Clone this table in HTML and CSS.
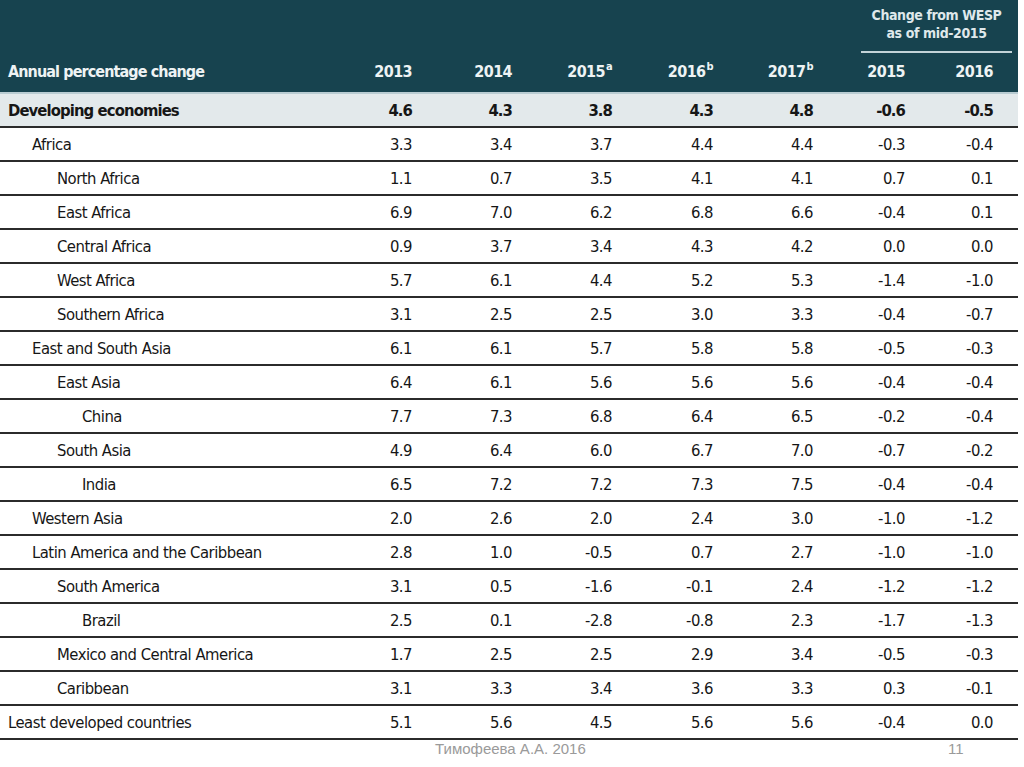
FILE: index.html
```html
<!DOCTYPE html>
<html lang="en">
<head>
<meta charset="utf-8">
<title>Annual percentage change</title>
<link rel="stylesheet" href="styles.css">
</head>
<body>
<div class="slide">
<table class="wesp">
  <colgroup>
    <col class="c-label"><col class="c-n"><col class="c-n"><col class="c-n"><col class="c-n4"><col class="c-n"><col class="c-n6"><col class="c-n7"><col class="c-pad">
  </colgroup>
  <thead>
    <tr class="h-top">
      <th></th><th></th><th></th><th></th><th></th><th></th>
      <th colspan="3" class="wesp-head"><div class="wesp-title">Change from WESP<br>as of mid-2015</div></th>
    </tr>
    <tr class="h-bot">
      <th class="lbl">Annual percentage change</th>
      <th>2013</th><th>2014</th><th>2015<sup>a</sup></th><th>2016<sup>b</sup></th><th>2017<sup>b</sup></th><th>2015</th><th>2016</th><th></th>
    </tr>
  </thead>
  <tbody>
    <tr class="total"><td class="lbl">Developing economies</td><td>4.6</td><td>4.3</td><td>3.8</td><td>4.3</td><td>4.8</td><td>-0.6</td><td>-0.5</td><td></td></tr>
    <tr><td class="lbl l1">Africa</td><td>3.3</td><td>3.4</td><td>3.7</td><td>4.4</td><td>4.4</td><td>-0.3</td><td>-0.4</td><td></td></tr>
    <tr><td class="lbl l2">North Africa</td><td>1.1</td><td>0.7</td><td>3.5</td><td>4.1</td><td>4.1</td><td>0.7</td><td>0.1</td><td></td></tr>
    <tr><td class="lbl l2">East Africa</td><td>6.9</td><td>7.0</td><td>6.2</td><td>6.8</td><td>6.6</td><td>-0.4</td><td>0.1</td><td></td></tr>
    <tr><td class="lbl l2">Central Africa</td><td>0.9</td><td>3.7</td><td>3.4</td><td>4.3</td><td>4.2</td><td>0.0</td><td>0.0</td><td></td></tr>
    <tr><td class="lbl l2">West Africa</td><td>5.7</td><td>6.1</td><td>4.4</td><td>5.2</td><td>5.3</td><td>-1.4</td><td>-1.0</td><td></td></tr>
    <tr><td class="lbl l2">Southern Africa</td><td>3.1</td><td>2.5</td><td>2.5</td><td>3.0</td><td>3.3</td><td>-0.4</td><td>-0.7</td><td></td></tr>
    <tr><td class="lbl l1">East and South Asia</td><td>6.1</td><td>6.1</td><td>5.7</td><td>5.8</td><td>5.8</td><td>-0.5</td><td>-0.3</td><td></td></tr>
    <tr><td class="lbl l2">East Asia</td><td>6.4</td><td>6.1</td><td>5.6</td><td>5.6</td><td>5.6</td><td>-0.4</td><td>-0.4</td><td></td></tr>
    <tr><td class="lbl l3">China</td><td>7.7</td><td>7.3</td><td>6.8</td><td>6.4</td><td>6.5</td><td>-0.2</td><td>-0.4</td><td></td></tr>
    <tr><td class="lbl l2">South Asia</td><td>4.9</td><td>6.4</td><td>6.0</td><td>6.7</td><td>7.0</td><td>-0.7</td><td>-0.2</td><td></td></tr>
    <tr><td class="lbl l3">India</td><td>6.5</td><td>7.2</td><td>7.2</td><td>7.3</td><td>7.5</td><td>-0.4</td><td>-0.4</td><td></td></tr>
    <tr><td class="lbl l1">Western Asia</td><td>2.0</td><td>2.6</td><td>2.0</td><td>2.4</td><td>3.0</td><td>-1.0</td><td>-1.2</td><td></td></tr>
    <tr><td class="lbl l1">Latin America and the Caribbean</td><td>2.8</td><td>1.0</td><td>-0.5</td><td>0.7</td><td>2.7</td><td>-1.0</td><td>-1.0</td><td></td></tr>
    <tr><td class="lbl l2">South America</td><td>3.1</td><td>0.5</td><td>-1.6</td><td>-0.1</td><td>2.4</td><td>-1.2</td><td>-1.2</td><td></td></tr>
    <tr><td class="lbl l3">Brazil</td><td>2.5</td><td>0.1</td><td>-2.8</td><td>-0.8</td><td>2.3</td><td>-1.7</td><td>-1.3</td><td></td></tr>
    <tr><td class="lbl l2">Mexico and Central America</td><td>1.7</td><td>2.5</td><td>2.5</td><td>2.9</td><td>3.4</td><td>-0.5</td><td>-0.3</td><td></td></tr>
    <tr><td class="lbl l2">Caribbean</td><td>3.1</td><td>3.3</td><td>3.4</td><td>3.6</td><td>3.3</td><td>0.3</td><td>-0.1</td><td></td></tr>
    <tr><td class="lbl">Least developed countries</td><td>5.1</td><td>5.6</td><td>4.5</td><td>5.6</td><td>5.6</td><td>-0.4</td><td>0.0</td><td></td></tr>
  </tbody>
</table>
<footer class="foot">
  <span class="author">Тимофеева А.А. 2016</span>
  <span class="page">11</span>
</footer>
</div>
</body>
</html>
```
FILE: styles.css
```css
html, body {
  margin: 0;
  padding: 0;
  background: #ffffff;
}
.slide {
  width: 1024px;
  height: 767px;
  position: relative;
  overflow: hidden;
}
.wesp {
  width: 1018px;
  border-collapse: collapse;
  table-layout: fixed;
  font-family: "DejaVu Sans Condensed", "Liberation Sans Narrow", "DejaVu Sans", sans-serif;
  font-stretch: condensed;
  color: #161616;
}
.c-label { width: 312px; }
.c-n { width: 100px; }
.c-n4 { width: 101px; }
.c-n6 { width: 92px; }
.c-n7 { width: 88px; }
.c-pad { width: 25px; }

thead th {
  background: #17434f;
  color: #eef3f4;
  font-weight: bold;
  padding: 0;
  text-align: right;
  font-size: 16px;
  letter-spacing: -0.6px;
}
.h-top th { height: 52px; vertical-align: top; }
.h-bot th {
  height: 37px;
  vertical-align: middle;
  padding-bottom: 2px;
  border-bottom: 2px solid #b9ccd2;
}
.h-bot th sup {
  font-size: 11px;
  vertical-align: 0;
  position: relative;
  top: -7px;
  margin-left: 1px;
}
thead th.lbl {
  text-align: left;
  padding-left: 8px;
  letter-spacing: -0.9px;
}
.wesp-head {
  text-align: center !important;
  padding: 0 6px 0 48px !important;
}
.wesp-title {
  font-size: 14px;
  line-height: 18px;
  padding-top: 6px;
  height: 45px;
  border-bottom: 2px solid #c3d3d8;
  text-align: center;
  color: #dfe8eb;
  letter-spacing: -0.4px;
}

tbody td {
  height: 32px;
  padding: 0;
  text-align: right;
  font-size: 16.5px;
  letter-spacing: -0.5px;
  border-bottom: 2px solid #2b2b2b;
  vertical-align: middle;
}
tbody td.lbl { text-align: left; padding-left: 8px; }
tbody td.l1 { padding-left: 32px; }
tbody td.l2 { padding-left: 57px; }
tbody td.l3 { padding-left: 82px; }
tbody tr.total td {
  background: #e3e9eb;
  font-weight: bold;
  letter-spacing: -0.9px;
}

.foot {
  position: relative;
  height: 26px;
  font-family: "Liberation Sans", Arial, sans-serif;
  font-size: 15px;
  color: #9a9a9a;
}
.author {
  position: absolute;
  left: 435px;
  top: 0;
}
.page {
  position: absolute;
  left: 948px;
  top: 0;
}
```
